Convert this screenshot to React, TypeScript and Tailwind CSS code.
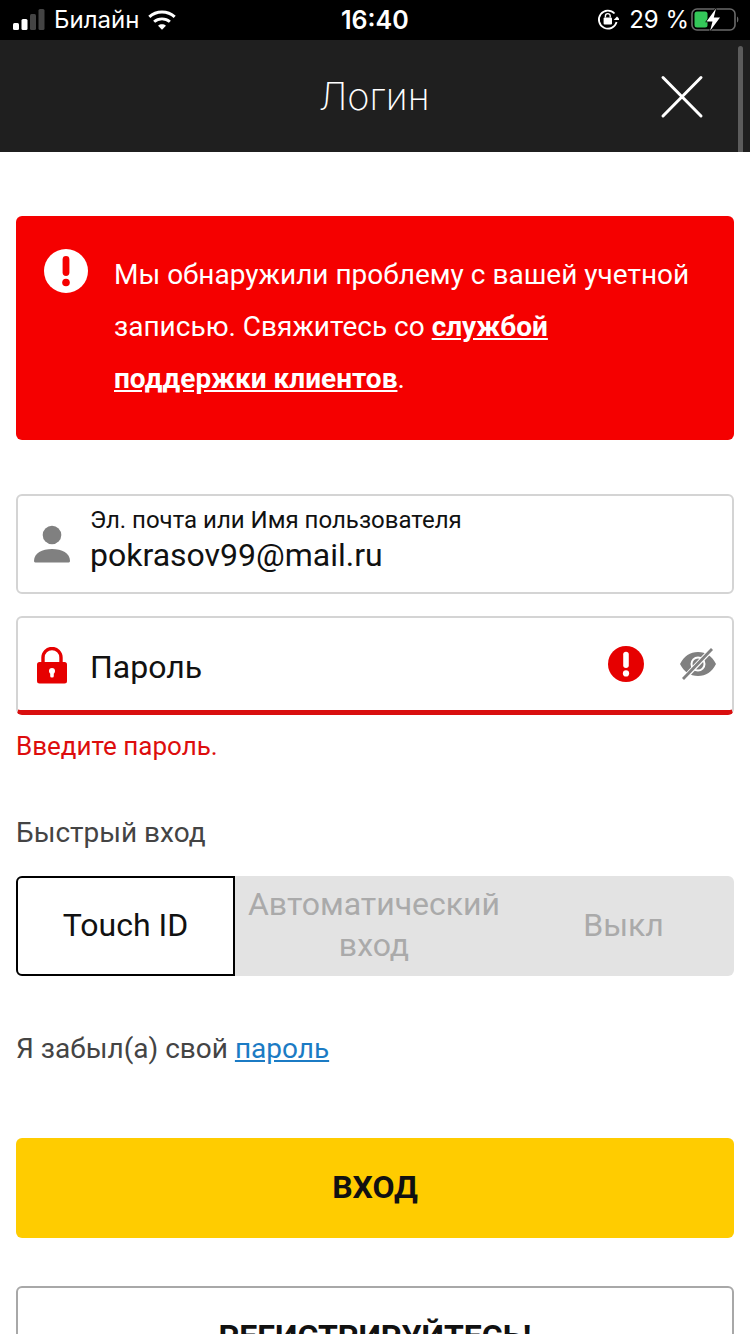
import React from "react";

function Signal() {
  return (
    <svg width="34" height="24" viewBox="0 0 34 24" className="block">
      <rect x="0" y="15" width="6" height="7" rx="1.500" fill="#fff" />
      <rect x="8.500" y="11" width="6" height="11" rx="1.500" fill="#fff" />
      <rect x="17" y="6" width="6" height="16" rx="1.500" fill="#444" />
      <rect x="25.500" y="1" width="6" height="21" rx="1.500" fill="#444" />
    </svg>
  );
}

function Wifi() {
  return (
    <svg width="28" height="22" viewBox="0 0 32 24" className="block">
      <path d="M1.500 8.500C9.500 1 22.500 1 30.500 8.500" fill="none" stroke="#fff" strokeWidth="3.400" />
      <path d="M7 14C12 9.600 20 9.600 25 14" fill="none" stroke="#fff" strokeWidth="3.400" />
      <path d="M11.500 18.600C14 16.400 18 16.400 20.500 18.600L16 23Z" fill="#fff" />
    </svg>
  );
}

function RotationLock() {
  return (
    <svg width="22" height="24" viewBox="0 0 22 24" className="block">
      <path d="M17.500 5.500A9 9 0 1 0 19.600 14" fill="none" stroke="#fff" strokeWidth="1.800" />
      <path d="M20 8.500l-3.400 3.400h6.800z" fill="#fff" />
      <rect x="6.600" y="9.500" width="8.400" height="7" rx="1" fill="#fff" />
      <path d="M8.400 9.500V8a2.400 2.400 0 0 1 4.800 0v1.500" fill="none" stroke="#fff" strokeWidth="1.400" />
    </svg>
  );
}

function Battery() {
  return (
    <svg width="50" height="26" viewBox="0 0 50 26" className="block">
      <rect x="1" y="2" width="43" height="21" rx="5" fill="none" stroke="#6a6a6a" strokeWidth="1.600" />
      <rect x="3.500" y="4.500" width="13" height="16" rx="2.500" fill="#34c759" />
      <path d="M46 9.500c1.800.5 1.800 5.500 0 6z" fill="#6a6a6a" />
      <path d="M25 1.500 15.500 14.500h6L19 24l10-13.500h-6.200z" fill="#fff" stroke="#000" strokeWidth="1.400" paintOrder="stroke" />
    </svg>
  );
}

function CloseIcon() {
  return (
    <svg width="44" height="44" viewBox="0 0 44 44" className="block">
      <path d="M3 2.500 41 41M41 2.500 3 41" stroke="#fff" strokeWidth="3" strokeLinecap="round" fill="none" />
    </svg>
  );
}

function Exclaim({ size, bg, fg }: { size: number; bg: string; fg: string }) {
  return (
    <svg width={size} height={size} viewBox="0 0 44 44" className="block shrink-0">
      <circle cx="22" cy="22" r="22" fill={bg} />
      <rect x="18.600" y="7" width="6.800" height="20" rx="3.400" fill={fg} />
      <circle cx="22" cy="33.500" r="3.800" fill={fg} />
    </svg>
  );
}

function UserIcon() {
  return (
    <svg width="38" height="38" viewBox="0 0 38 38" className="block">
      <circle cx="19" cy="10" r="9.300" fill="#808080" />
      <path d="M1 36c0-8 8-12 18-12s18 4 18 12c0 1-1 1.500-2 1.500H3C2 37.500 1 37 1 36z" fill="#808080" />
    </svg>
  );
}

function LockIcon() {
  return (
    <svg width="32" height="38" viewBox="0 0 32 38" className="block">
      <path d="M7 16V10.500a9 9 0 0 1 18 0V16" fill="none" stroke="#e60000" strokeWidth="3.400" />
      <rect x="1" y="15" width="30" height="21.500" rx="2.500" fill="#e60000" />
      <circle cx="16" cy="24" r="3" fill="#fff" />
      <rect x="14.200" y="24" width="3.600" height="6.500" rx="1.500" fill="#fff" />
    </svg>
  );
}

function EyeOff() {
  return (
    <svg width="36" height="32" viewBox="0 0 36 32" className="block">
      <path fillRule="evenodd" d="M0 16C4 8 10 4 18 4s14 4 18 12c-4 8-10 12-18 12S4 24 0 16zM18 8.500a7.500 7.500 0 1 0 0 15 7.500 7.500 0 0 0 0-15z" fill="#808080" />
      <circle cx="18" cy="16" r="5.500" fill="#808080" />
      <path d="M3 31.500 32 1" stroke="#fff" strokeWidth="5" fill="none" />
      <path d="M3 31 32 1" stroke="#808080" strokeWidth="2.800" fill="none" />
    </svg>
  );
}

export default function App() {
  return (
    <div className="relative h-[1334px] w-[750px] overflow-hidden bg-white font-['Roboto',sans-serif] text-[#111]">
      <div className="flex h-10 items-center bg-black pl-[13px] pr-[9px] text-white font-['Inter',sans-serif]">
        <div className="flex w-[328px] items-center">
          <Signal />
          <span className="ml-[7px] text-[24px] leading-none">Билайн</span>
          <span className="ml-[9px]"><Wifi /></span>
        </div>
        <span className="text-[25px] font-semibold leading-none">16:40</span>
        <div className="ml-auto flex items-center">
          <RotationLock />
          <span className="ml-[10px] mr-[2px] text-[24px] leading-none">29 %</span>
          <Battery />
        </div>
      </div>

      <header className="relative flex h-[112px] items-center justify-center bg-[#1f1f1f]">
        <h1 className="pr-[2px] font-['Inter',sans-serif] text-[38px] font-extralight leading-none text-white">Логин</h1>
        <button className="absolute right-[46px] top-[35px]"><CloseIcon /></button>
        <div className="absolute right-[7px] top-[6px] h-[106px] w-[5px] rounded-t-full bg-[#5c5c5c]" />
      </header>

      <main className="flex flex-col px-4 pt-[64px]">
        <div className="flex h-[224px] items-start rounded-[6px] bg-[#f50000] pl-[28px] pr-[40px] pt-[33px] text-white">
          <div><Exclaim size={44} bg="#fff" fg="#f50000" /></div>
          <p className="ml-[26px] text-[28px] leading-[52px]">
            Мы обнаружили проблему с вашей учетной записью. Свяжитесь со{" "}
            <a className="font-bold underline">службой</a>{" "}
            <a className="font-bold underline">поддержки клиентов</a>.
          </p>
        </div>

        <div className="mt-[54px] flex h-[100px] items-center rounded-[6px] border-2 border-[#d4d4d4]">
          <div className="ml-[15px] w-[38px]"><UserIcon /></div>
          <div className="ml-[19px] flex flex-col pb-[9px]">
            <span className="text-[24px] leading-[30px]">Эл. почта или Имя пользователя</span>
            <span className="text-[32px] leading-[40px]">pokrasov99@mail.ru</span>
          </div>
        </div>

        <div className="mt-[22px] flex h-[99px] items-center rounded-[6px] border-2 border-b-[5px] border-[#d4d4d4] border-b-[#d90f0f]">
          <div className="ml-[18px] w-[32px] pt-[4px]"><LockIcon /></div>
          <span className="ml-[22px] pt-[6px] text-[32px] leading-none">Пароль</span>
          <div className="ml-auto mr-[16px] flex items-center">
            <Exclaim size={36} bg="#e60000" fg="#fff" />
            <span className="ml-[36px]"><EyeOff /></span>
          </div>
        </div>

        <p className="mt-[16px] text-[26px] leading-[30px] text-[#dd0d0d]">Введите пароль.</p>

        <p className="mt-[56px] text-[28px] leading-[32px] text-[#444]">Быстрый вход</p>

        <div className="mt-[27px] flex h-[100px] rounded-[6px] bg-[#e3e3e3]">
          <div className="flex w-[219px] items-center justify-center rounded-l-[6px] border-2 border-black bg-white pb-[2px] text-[32px]">Touch ID</div>
          <div className="flex w-[278px] items-center justify-center pb-[2px] text-center text-[32px] leading-[41px] text-[#aaaaaa]">Автоматический<br />вход</div>
          <div className="flex flex-1 items-center justify-center pb-[2px] text-[32px] text-[#aaaaaa]">Выкл</div>
        </div>

        <p className="mt-[57px] text-[28px] leading-[32px] text-[#444]">
          Я забыл(а) свой <a className="text-[#1b7bc4] underline">пароль</a>
        </p>

        <button className="mt-[73px] h-[100px] shrink-0 rounded-[6px] bg-[#ffcc00] pb-[2px] text-[32px] font-bold text-[#111]">ВХОД</button>

        <button className="mt-[48px] h-[100px] shrink-0 rounded-[6px] border-2 border-[#a8a8a8] bg-white text-[32px] font-bold text-[#111]">РЕГИСТРИРУЙТЕСЬ!</button>
      </main>
    </div>
  );
}
